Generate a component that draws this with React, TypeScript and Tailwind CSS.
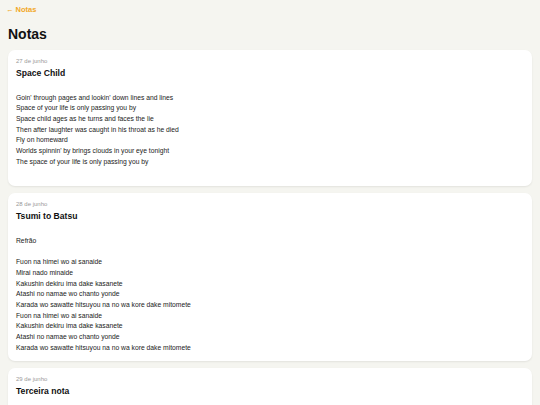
import React from "react";

const notes = [
  {
    date: "27 de junho",
    title: "Space Child",
    body: "\nGoin' through pages and lookin' down lines and lines\nSpace of your life is only passing you by\nSpace child ages as he turns and faces the lie\nThen after laughter was caught in his throat as he died\nFly on homeward\nWorlds spinnin' by brings clouds in your eye tonight\nThe space of your life is only passing you by\n",
  },
  {
    date: "28 de junho",
    title: "Tsumi to Batsu",
    body: "\nRefrão\n\nFuon na himei wo ai sanaide\nMirai nado minaide\nKakushin dekiru ima dake kasanete\nAtashi no namae wo chanto yonde\nKarada wo sawatte hitsuyou na no wa kore dake mitomete\nFuon na himei wo ai sanaide\nKakushin dekiru ima dake kasanete\nAtashi no namae wo chanto yonde\nKarada wo sawatte hitsuyou na no wa kore dake mitomete",
  },
  {
    date: "29 de junho",
    title: "Terceira nota",
    body: "\nLorem ipsum",
  },
];

export default function App() {
  return (
    <div
      className="min-h-screen bg-[#f5f5f0] px-2 pt-[5px] text-[#222]"
      style={{ fontFamily: '"Liberation Sans", Arial, sans-serif' }}
    >
      <a className="block text-[7.5px] font-bold leading-[10px] text-[#f2a827] -ml-[2px]">
        ← Notas
      </a>
      <h1 className="mt-[11px] text-[14px] font-bold leading-[16px] text-[#111]">
        Notas
      </h1>
      <div className="mt-[8px] flex flex-col gap-[7px]">
        {notes.map((n) => (
          <div
            key={n.date}
            className="rounded-[7px] bg-white px-2 pt-[7px] pb-[8px] shadow-[0_1px_2px_rgba(0,0,0,0.08)]"
          >
            <div className="text-[6px] leading-[9px] text-[#999]">{n.date}</div>
            <div className="mt-[1px] text-[8.6px] font-bold leading-[12px] text-[#111]">
              {n.title}
            </div>
            <div className="mt-[3px] text-[6.75px] leading-[10.7px] text-[#222]">
              {n.body.split("\n").map((line, i) => (
                <div key={i} className="h-[10.7px] whitespace-pre">
                  {line}
                </div>
              ))}
            </div>
          </div>
        ))}
      </div>
    </div>
  );
}
